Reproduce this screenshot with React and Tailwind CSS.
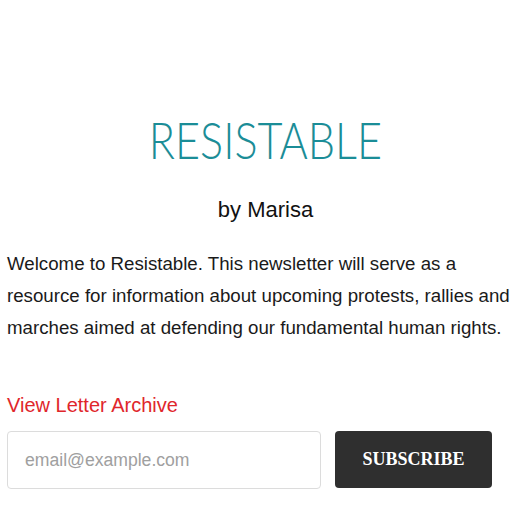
export default function App() {
  return (
    <div className="min-h-[514px] bg-white overflow-hidden" style={{ fontFamily: "'Liberation Sans', Arial, sans-serif" }}>
      <div className="w-[524px] pl-[7px] pt-[113px]">
        <h1
          className="text-center text-[52px] leading-[52px] font-light text-[#1b8d97]"
          style={{ fontFamily: "Lato, 'Open Sans', sans-serif" }}
        >
          <span className="inline-block scale-x-[0.83]">RESISTABLE</span>
        </h1>
        <p className="mt-[31px] text-center text-[22px] leading-[28px] text-[#111]">by Marisa</p>
        <p className="mt-[24px] text-[18.7px] leading-[32px] text-[#1a1a1a]">
          Welcome to Resistable. This newsletter will serve as a resource for information about upcoming protests, rallies and marches aimed at defending our fundamental human rights.
        </p>
        <a href="#" className="block mt-[49px] text-[20px] leading-[24px] text-[#e0262b]">
          View Letter Archive
        </a>
        <form className="mt-[14px] flex gap-[14px]" onSubmit={(e) => e.preventDefault()}>
          <input
            type="email"
            placeholder="email@example.com"
            className="w-[314px] h-[58px] px-[17px] rounded-[4px] border border-[#dcdcdc] text-[17.6px] text-[#333] placeholder:text-[#a0a0a0] outline-none"
          />
          <button
            type="submit"
            className="w-[157px] h-[57px] rounded-[4px] bg-[#2f2f2f] text-white text-[18px] font-bold uppercase"
            style={{ fontFamily: "'Liberation Serif', 'Times New Roman', serif" }}
          >
            Subscribe
          </button>
        </form>
      </div>
    </div>
  );
}
